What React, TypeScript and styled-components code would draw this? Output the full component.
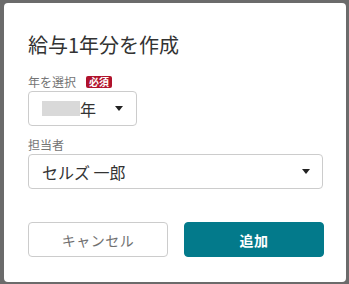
import styled, { createGlobalStyle } from "styled-components"

const GlobalStyle = createGlobalStyle`
  html, body {
    margin: 0;
    padding: 0;
    background-color: #6b6b6b;
  }
  body {
    font-family: "Noto Sans CJK JP", "Noto Sans", sans-serif;
  }
  * {
    box-sizing: border-box;
  }
`

const Backdrop = styled.div`
  width: 349px;
  height: 284px;
  padding: 3px 3px 2px 4px;
`

const Dialog = styled.div`
  height: 100%;
  background-color: #ffffff;
  border-radius: 4px;
  padding: 28px 22px 0 24px;

  display: flex;
  flex-direction: column;
`

const Title = styled.h2`
  margin: 0;
  font-size: 20px;
  line-height: 28px;
  font-weight: 400;
  color: #333333;
`

const Field = styled.div<{ $top: number }>`
  margin-top: ${props => props.$top}px;
  display: flex;
  flex-direction: column;
  gap: 1px;
`

const LabelRow = styled.div`
  display: flex;
  align-items: center;
  height: 16px;
`

const Label = styled.span`
  font-size: 12px;
  line-height: 16px;
  color: #747474;
`

const RequiredBadge = styled.span`
  margin-left: 10px;
  height: 12px;
  padding: 0 3px;
  border-radius: 2px;
  background-color: #b0122c;
  color: #ffffff;
  font-size: 10px;
  line-height: 12px;
  font-weight: 700;
`

const SelectBox = styled.div<{ $width: number }>`
  width: ${props => props.$width}px;
  height: 35px;
  border: 1px solid #cccccc;
  border-radius: 4px;
  padding: 0 12px 0 13px;

  display: flex;
  align-items: center;
  justify-content: space-between;
`

const SelectValue = styled.div`
  display: flex;
  align-items: center;
  font-size: 16px;
  color: #333333;
`

const MaskedYear = styled.span`
  width: 38px;
  height: 15px;
  background-color: #d9d9d9;
`

const Caret = styled.span<{ $inset?: number }>`
  margin-right: ${props => props.$inset ?? 0}px;
  width: 0;
  height: 0;
  border-left: 4.5px solid transparent;
  border-right: 4.5px solid transparent;
  border-top: 5px solid #222222;
`

const Footer = styled.div`
  margin-top: 33px;
  display: grid;
  grid-template-columns: 140px 140px;
  gap: 16px;
`

const Button = styled.button<{ $primary?: boolean }>`
  height: 35px;
  border-radius: 4px;
  font-family: inherit;
  font-size: 14px;
  letter-spacing: 0.5px;
  border: 1px solid ${props => (props.$primary ? "#037a8b" : "#cccccc")};
  background-color: ${props => (props.$primary ? "#037a8b" : "#ffffff")};
  color: ${props => (props.$primary ? "#ffffff" : "#707070")};
  font-weight: ${props => (props.$primary ? 700 : 400)};
  cursor: pointer;
`

export default function App() {
  return (
    <>
      <GlobalStyle />
      <Backdrop>
        <Dialog>
          <Title>給与1年分を作成</Title>
          <Field $top={15}>
            <LabelRow>
              <Label>年を選択</Label>
              <RequiredBadge>必須</RequiredBadge>
            </LabelRow>
            <SelectBox $width={109}>
              <SelectValue>
                <MaskedYear />
                年
              </SelectValue>
              <Caret $inset={1} />
            </SelectBox>
          </Field>
          <Field $top={11}>
            <LabelRow>
              <Label>担当者</Label>
            </LabelRow>
            <SelectBox $width={295}>
              <SelectValue>セルズ 一郎</SelectValue>
              <Caret />
            </SelectBox>
          </Field>
          <Footer>
            <Button>キャンセル</Button>
            <Button $primary>追加</Button>
          </Footer>
        </Dialog>
      </Backdrop>
    </>
  )
}
